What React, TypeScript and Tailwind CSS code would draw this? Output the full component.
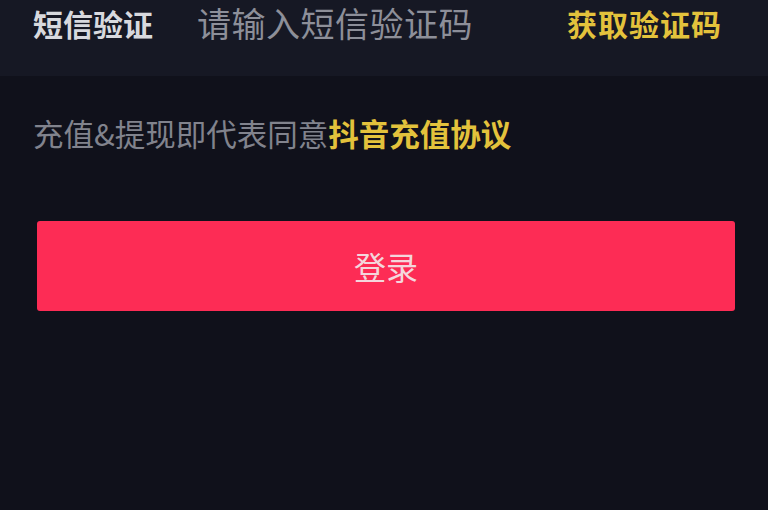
import React from "react";

export default function App() {
  return (
    <div
      className="w-[768px] h-[510px] bg-[#10111b] overflow-hidden"
      style={{ fontFamily: '"Noto Sans CJK SC", "Noto Sans", sans-serif' }}
    >
      <div className="h-[76px] bg-[#161824] flex items-center pl-[33px] pr-[46px] pb-[30px]">
        <span className="text-[30px] font-bold text-[#d8d9de] leading-[36px]">短信验证</span>
        <span className="ml-[44px] text-[34px] text-[#8d8f99] tracking-[0.5px] leading-[40px]">请输入短信验证码</span>
        <span className="ml-auto text-[30px] font-bold text-[#e3c23c] tracking-[1px] leading-[36px]">获取验证码</span>
      </div>
      <div className="pl-[33px] pt-[42px] text-[30.5px] leading-none text-[#81838d]">
        充值&amp;提现即代表同意<span className="text-[#e3c23c] font-bold">抖音充值协议</span>
      </div>
      <div className="pl-[37px] pr-[33px] pt-[72px]">
        <button className="w-full h-[90px] rounded-[3px] bg-[#fd2c55] text-[#f4d6dc] text-[32px] flex items-center justify-center">
          登录
        </button>
      </div>
    </div>
  );
}
